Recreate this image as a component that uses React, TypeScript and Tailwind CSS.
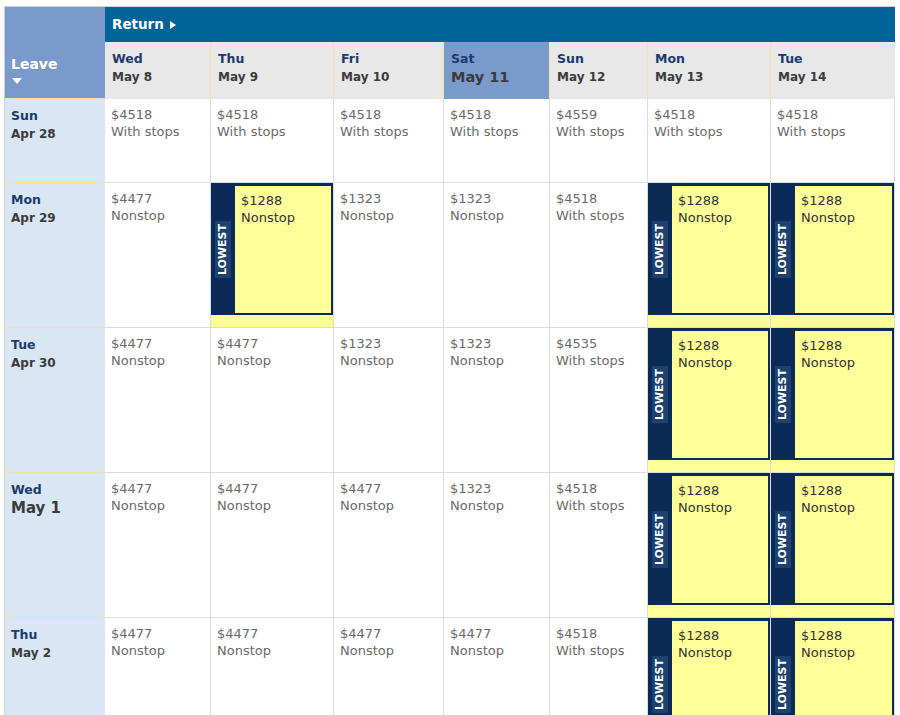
import React from "react";

type Cell = { price: string; note: string; lowest?: boolean };

const returnDays = [
  { day: "Wed", date: "May 8" },
  { day: "Thu", date: "May 9" },
  { day: "Fri", date: "May 10" },
  { day: "Sat", date: "May 11", selected: true },
  { day: "Sun", date: "May 12" },
  { day: "Mon", date: "May 13" },
  { day: "Tue", date: "May 14" },
];

const ws = (p: string): Cell => ({ price: p, note: "With stops" });
const ns = (p: string): Cell => ({ price: p, note: "Nonstop" });
const low: Cell = { price: "$1288", note: "Nonstop", lowest: true };

const rows = [
  {
    day: "Sun",
    date: "Apr 28",
    h: "h-[84px]",
    cells: [ws("$4518"), ws("$4518"), ws("$4518"), ws("$4518"), ws("$4559"), ws("$4518"), ws("$4518")],
  },
  {
    day: "Mon",
    date: "Apr 29",
    h: "h-[145px]",
    cells: [ns("$4477"), low, ns("$1323"), ns("$1323"), ws("$4518"), low, low],
  },
  {
    day: "Tue",
    date: "Apr 30",
    h: "h-[145px]",
    cells: [ns("$4477"), ns("$4477"), ns("$1323"), ns("$1323"), ws("$4535"), low, low],
  },
  {
    day: "Wed",
    date: "May 1",
    selected: true,
    h: "h-[145px]",
    cells: [ns("$4477"), ns("$4477"), ns("$4477"), ns("$1323"), ws("$4518"), low, low],
  },
  {
    day: "Thu",
    date: "May 2",
    h: "h-[145px]",
    cells: [ns("$4477"), ns("$4477"), ns("$4477"), ns("$4477"), ws("$4518"), low, low],
  },
];

function PriceCell({ cell }: { cell: Cell }) {
  if (cell.lowest) {
    return (
      <div className="bg-[#ffff99] border-r border-b border-[#dcdcdc]">
        <div className="flex h-[132px] bg-[#0b2a55] pt-[3px] pr-[2px] pb-[2px]">
          <div className="w-[24px] flex items-center justify-center">
            <span className="[writing-mode:vertical-rl] rotate-180 bg-[#1d4170] px-[3px] py-[1px] text-[11px] font-bold leading-[14px] text-white">
              LOWEST
            </span>
          </div>
          <div className="flex-1 bg-[#ffff99] pl-[6px] pt-[6px] text-[13px] leading-[17px] text-[#333]">
            <div>{cell.price}</div>
            <div>{cell.note}</div>
          </div>
        </div>
      </div>
    );
  }
  return (
    <div className="bg-white border-r border-b border-[#dcdcdc] pl-[6px] pt-[7px] text-[13px] leading-[17px] text-[#6a6a6a]">
      <div>{cell.price}</div>
      <div>{cell.note}</div>
    </div>
  );
}

export default function App() {
  return (
    <div className="bg-white w-[900px] h-[715px] overflow-hidden font-['DejaVu_Sans',sans-serif]">
      <div className="ml-[4px] mt-[6px] w-[891px] border-t border-l border-[#cfcfcf] grid grid-cols-[100px_106px_123px_110px_106px_98px_123px_124px]">
        {/* Leave header */}
        <div className="row-span-2 bg-[#7a9acc] border-b border-[#f4e3a3] pl-[6px] pt-[48px]">
          <div className="text-[14px] font-bold leading-[18px] text-white">Leave</div>
          <svg width="10" height="6" viewBox="0 0 10 6" className="mt-[5px] ml-[1px]">
            <path d="M0 0 L10 0 L5 6 Z" fill="white" />
          </svg>
        </div>

        {/* Return bar */}
        <div className="col-span-7 h-[35px] bg-[#00639a] flex items-center pl-[7px] gap-[6px]">
          <span className="text-[13.5px] font-bold text-white">Return</span>
          <svg width="6" height="8" viewBox="0 0 6 8">
            <path d="M0 0 L6 4 L0 8 Z" fill="white" />
          </svg>
        </div>

        {/* Return day headers */}
        {returnDays.map((d, i) => (
          <div
            key={d.day}
            className={`h-[57px] pl-[7px] pt-[7px] ${i < 6 ? "border-r border-[#f4e3a3]" : ""} ${
              d.selected ? "bg-[#7a9acc]" : "bg-[#e8e8e8]"
            }`}
          >
            <div className="text-[12.5px] font-bold leading-[19px] text-[#1b3a6e]">{d.day}</div>
            <div
              className={`font-bold leading-[19px] text-[#3b3b3b] ${
                d.selected ? "text-[14.5px]" : "text-[12px]"
              }`}
            >
              {d.date}
            </div>
          </div>
        ))}

        {/* Rows */}
        {rows.map((r) => (
          <React.Fragment key={r.date}>
            <div className={`${r.h} bg-[#d9e6f4] border-b border-[#f4e3a3] pl-[6px] pt-[7px]`}>
              <div className="text-[12.5px] font-bold leading-[19px] text-[#1b3a6e]">{r.day}</div>
              <div
                className={`font-bold leading-[19px] text-[#3b3b3b] ${
                  r.selected ? "text-[15px]" : "text-[12px]"
                }`}
              >
                {r.date}
              </div>
            </div>
            {r.cells.map((c, j) => (
              <PriceCell key={j} cell={c} />
            ))}
          </React.Fragment>
        ))}
      </div>
    </div>
  );
}
